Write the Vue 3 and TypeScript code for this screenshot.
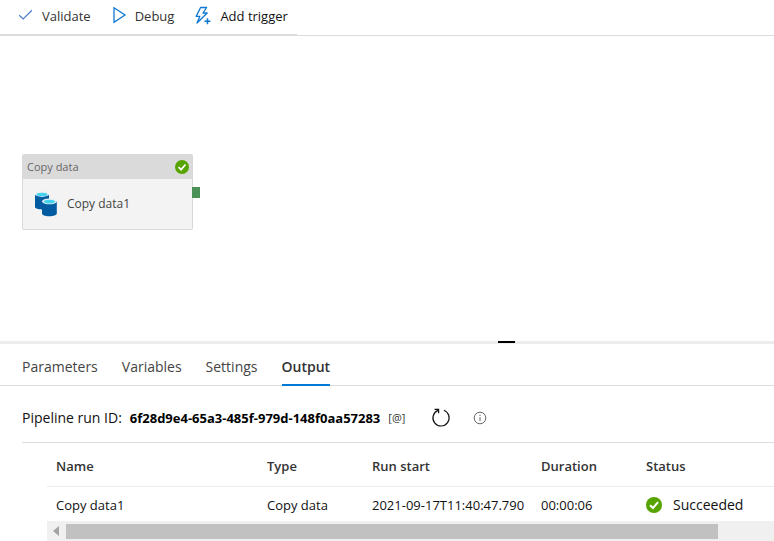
<script setup lang="ts">
import { ref } from 'vue'

interface ActivityRun {
  name: string
  type: string
  start: string
  duration: string
  status: string
}

const tabs: string[] = ['Parameters', 'Variables', 'Settings', 'Output']
const activeTab = ref<string>('Output')
const runId = '6f28d9e4-65a3-485f-979d-148f0aa57283'
const runs: ActivityRun[] = [
  {
    name: 'Copy data1',
    type: 'Copy data',
    start: '2021-09-17T11:40:47.790',
    duration: '00:00:06',
    status: 'Succeeded',
  },
]
</script>

<template>
  <div class="designer">
    <header class="toolbar">
      <div class="commands">
        <button type="button" class="command validate">
          <svg width="16" height="16" viewBox="0 0 16 16" fill="none" stroke="#4f7fcb" stroke-width="1.2">
            <path d="M1.2 7.2 5.2 10.9 13.9 2.3" />
          </svg>
          <span>Validate</span>
        </button>
        <button type="button" class="command debug">
          <svg width="16" height="18" viewBox="0 0 16 18" fill="none" stroke="#0f78d4" stroke-width="1.3">
            <path d="M3 0.8 14 8 3 15.4Z" />
          </svg>
          <span>Debug</span>
        </button>
        <button type="button" class="command trigger">
          <svg width="18" height="20" viewBox="0 0 18 20" fill="none" stroke="#0f78d4" stroke-width="1.3">
            <path d="M6.6 1.5H12.6L9 7H13.2L3 17 5.8 10.4H2.2Z" stroke-linejoin="round" />
            <path d="M13.5 12.2V18.2M10.5 15.2H16.5" stroke-width="1.5" />
          </svg>
          <span>Add trigger</span>
        </button>
      </div>
    </header>

    <main class="canvas">
      <article class="node">
        <div class="node-head">
          <span>Copy data</span>
          <svg width="14" height="14" viewBox="0 0 16 16">
            <circle cx="8" cy="8" r="8" fill="#57a300" />
            <path d="M4 8.2 7 11 12 5.2" fill="none" stroke="#fff" stroke-width="2" />
          </svg>
        </div>
        <div class="node-body">
          <svg width="24" height="26" viewBox="0 0 24 26">
            <path d="M0 3V16C0 17.3 3 18.4 7 18.4S14 17.3 14 16V3Z" fill="#005ba1" />
            <ellipse cx="7" cy="3.2" rx="7" ry="2.7" fill="#e3eef3" />
            <ellipse cx="7" cy="3.5" rx="5.4" ry="1.8" fill="#42d2ed" />
            <path d="M7 10.5V22.4C7 23.9 10 25.2 14.2 25.2S21.8 23.9 21.8 22.4V10.5Z" fill="#005ba1" />
            <ellipse cx="14.4" cy="10.4" rx="7.4" ry="2.9" fill="#e3eef3" />
            <ellipse cx="14.4" cy="10.6" rx="5.6" ry="1.9" fill="#42d2ed" />
          </svg>
          <span>Copy data1</span>
        </div>
        <span class="port"></span>
      </article>
    </main>

    <section class="panel">
      <div class="splitter"><span class="grip"></span></div>
      <nav class="tabs" role="tablist">
        <button
          v-for="tab in tabs"
          :key="tab"
          type="button"
          role="tab"
          class="tab"
          :class="{ active: tab === activeTab }"
          :aria-selected="tab === activeTab"
          @click="activeTab = tab"
        >
          {{ tab }}
        </button>
      </nav>

      <div class="output">
        <div class="run-line">
          <span class="run-label">Pipeline run ID:</span>
          <strong class="run-id">{{ runId }}</strong>
          <button type="button" class="at">[@]</button>
          <button type="button" class="refresh" aria-label="Refresh">
            <svg width="20" height="20" viewBox="0 0 20 20" fill="none" stroke="#111" stroke-width="1.2">
              <path d="M12.8 2.3A8.1 8.1 0 1 1 7 2.4" />
              <path d="M3.6 1.4H7.6V5.2" />
            </svg>
          </button>
          <button type="button" class="info" aria-label="Information">
            <svg width="14" height="14" viewBox="0 0 14 14" fill="none" stroke="#666">
              <circle cx="7" cy="7" r="5.8" />
              <path d="M7 6V10.2M7 3.8V5" />
            </svg>
          </button>
        </div>

        <div class="grid">
          <table>
            <thead>
              <tr>
                <th class="c-name">Name</th>
                <th class="c-type">Type</th>
                <th class="c-start">Run start</th>
                <th class="c-duration">Duration</th>
                <th>Status</th>
              </tr>
            </thead>
            <tbody>
              <tr v-for="run in runs" :key="run.name">
                <td>{{ run.name }}</td>
                <td>{{ run.type }}</td>
                <td>{{ run.start }}</td>
                <td>{{ run.duration }}</td>
                <td>
                  <span class="status">
                    <svg width="16" height="16" viewBox="0 0 16 16">
                      <circle cx="8" cy="8" r="8" fill="#57a300" />
                      <path d="M4 8.2 7 11 12 5.2" fill="none" stroke="#fff" stroke-width="2" />
                    </svg>
                    <span>{{ run.status }}</span>
                  </span>
                </td>
              </tr>
            </tbody>
          </table>
          <div class="scrollbar">
            <button type="button" class="scroll-left" aria-label="Scroll left">
              <svg width="6" height="10" viewBox="0 0 6 10"><path d="M6 0V10L0 5Z" fill="#a3a3a3" /></svg>
            </button>
            <span class="thumb"></span>
          </div>
        </div>
      </div>
    </section>
  </div>
</template>

<style>
body {
  background: #fff;
}
</style>

<style scoped>
.designer {
  min-height: 100vh;
  display: flex;
  flex-direction: column;
  overflow: hidden;
  color: #111;
  font-family: "Segoe UI", "Open Sans", "Noto Sans", sans-serif;
  font-size: 13px;
  line-height: 18px;
}
button {
  margin: 0;
  padding: 0;
  border: 0;
  background: none;
  color: inherit;
  font: inherit;
  cursor: pointer;
}
svg {
  display: block;
  flex: none;
}
.toolbar {
  display: flex;
  height: 35px;
  border-bottom: 1px solid #dcdcdc;
}
.commands {
  display: flex;
  align-items: center;
  gap: 20px;
  box-sizing: border-box;
  height: 35px;
  padding: 0 9px 2px 18px;
  border-bottom: 1px solid #dcdcdc;
}
.command {
  display: flex;
  align-items: center;
  gap: 8px;
  color: #333;
  white-space: nowrap;
}
.trigger {
  color: #111;
}
.canvas {
  position: relative;
  flex: 1;
  min-height: 240px;
}
.node {
  position: absolute;
  left: 22px;
  top: 118px;
  width: 169px;
  border: 1px solid #d9d9d9;
  border-radius: 2px;
  background: #f3f3f3;
  color: #444;
  font-size: 12px;
}
.node-head {
  display: flex;
  align-items: center;
  justify-content: space-between;
  height: 24px;
  padding: 0 3px 0 4px;
  background: #dadada;
  color: #666;
  font-size: 11px;
}
.node-body {
  display: flex;
  align-items: center;
  gap: 8px;
  height: 50px;
  padding-left: 12px;
}
.port {
  position: absolute;
  left: 100%;
  top: 32px;
  width: 8px;
  height: 11px;
  background: #4b9157;
}
.splitter {
  display: flex;
  justify-content: center;
  height: 3px;
  padding-left: 239px;
  background: #ededed;
}
.grip {
  width: 17px;
  height: 2px;
  background: #000;
}
.tabs {
  display: flex;
  gap: 24px;
  height: 41px;
  padding-left: 22px;
  border-bottom: 1px solid #dedede;
  color: #444;
  font-size: 14px;
}
.tab {
  height: 42px;
  padding-top: 6px;
  border-bottom: 2px solid transparent;
}
.tab.active {
  border-bottom-color: #0078d4;
  color: #333;
  font-weight: 600;
}
.output {
  padding-left: 22px;
}
.run-line {
  display: flex;
  align-items: center;
  height: 48px;
  padding-top: 8px;
  border-bottom: 1px solid #dcdcdc;
  white-space: nowrap;
}
.run-label {
  font-size: 14px;
}
.run-id {
  margin-left: 8px;
  color: #000;
  font-size: 13px;
  font-weight: 700;
}
.at {
  margin-left: 8px;
  color: #333;
  font-size: 11px;
}
.refresh {
  margin-left: 26px;
}
.info {
  margin-left: 22px;
}
.grid {
  margin-left: 25px;
}
table {
  width: 100%;
  border-collapse: collapse;
  table-layout: fixed;
}
th,
td {
  padding: 2px 0 0 9px;
  text-align: left;
  white-space: nowrap;
}
th {
  height: 41px;
  border-bottom: 1px solid #ededed;
  color: #333;
  font-weight: 600;
}
td {
  height: 32px;
}
.c-name {
  width: 202px;
}
.c-type,
.c-duration {
  width: 96px;
}
.c-start {
  width: 160px;
}
.status {
  display: flex;
  align-items: center;
  gap: 11px;
  font-size: 14px;
}
.scrollbar {
  display: flex;
  align-items: center;
  height: 20px;
  background: #f0f0f0;
}
.scroll-left {
  display: flex;
  align-items: center;
  justify-content: center;
  width: 19px;
  height: 20px;
}
.thumb {
  width: 92%;
  height: 15px;
  margin-right: 56px;
  background: #c1c1c1;
}
</style>
